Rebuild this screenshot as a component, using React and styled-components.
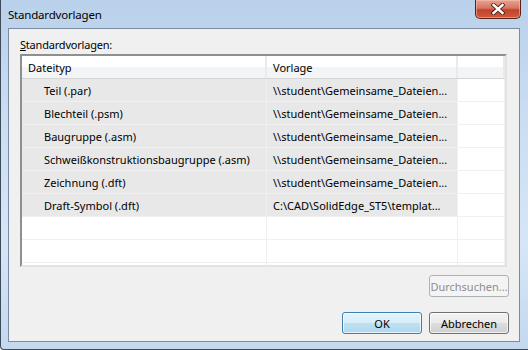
import React from "react"
import styled, { createGlobalStyle } from "styled-components"

const GlobalStyle = createGlobalStyle`
    body {
        margin: 0;
        font-family: "Noto Sans", "Open Sans", sans-serif;
        font-size: 11px;
        color: #000;
    }
`

const Window = styled.div`
    width: 528px;
    height: 350px;
    box-sizing: border-box;
    display: flex;
    flex-direction: column;
    padding: 0 8px 7px 7px;
    border-left: 1px solid #3d4a5a;
    border-bottom: 1px solid #3d4a5a;
    border-bottom-left-radius: 4px;
    background: linear-gradient(to bottom, #b9d1ea 0%, #c9dcf1 30%, #d6e6f7 70%, #c4d8ee 100%);
    overflow: hidden;
`
const TitleBar = styled.div`
    height: 28px;
    display: flex;
    align-items: flex-start;
`
const Title = styled.div`
    padding-top: 7px;
    font-size: 11.5px;
    letter-spacing: -0.2px;
`
const CloseButton = styled.div`
    margin-left: auto;
    margin-right: -1px;
    width: 46px;
    height: 19px;
    box-sizing: border-box;
    border: 1px solid #5a2119;
    border-top: none;
    border-radius: 0 0 5px 5px;
    background: linear-gradient(to bottom, #e6a393 0%, #d7765f 45%, #c2432c 55%, #cf5a3e 100%);
    box-shadow: inset 0 0 0 1px rgba(255, 200, 190, 0.5);
    display: flex;
    align-items: center;
    justify-content: center;
`
const Client = styled.div`
    flex: 1;
    display: flex;
    flex-direction: column;
    background: #f0f0f0;
    border: 1px solid #7d8da1;
    padding: 8px 10px 7px 11px;
`
const Label = styled.div`
    height: 17px;
    line-height: 15px;
    letter-spacing: -0.2px;
`
const ListBox = styled.div`
    height: 213px;
    margin-right: 2px;
    box-sizing: border-box;
    border-top: 2px solid #8e8f8f;
    border-left: 2px solid #8e8f8f;
    border-right: 2px solid #e3e3e3;
    border-bottom: 2px solid #e3e3e3;
    background: #fff;
    overflow: hidden;
`
const Row = styled.div`
    display: grid;
    grid-template-columns: 245px 191px 1fr;
    height: 22px;
    border-bottom: 1px solid ${props => props.header ? "#d5d5d5" : "#f0f0f0"};
    background: ${props => props.header ? "linear-gradient(to bottom, #fff 0%, #fff 50%, #f3f4f6 51%, #f3f4f6 100%)" : "#fff"};
`
const Cell = styled.div`
    display: flex;
    align-items: center;
    padding-left: ${props => props.indent ? 22 : 6}px;
    border-right: ${props => props.header ? "2px solid #e8eaec" : "1px solid #f0f0f0"};
    background: ${props => props.filled ? "#e8e8e8" : "transparent"};
    white-space: nowrap;
    overflow: hidden;
`
const ButtonRow = styled.div`
    display: flex;
    justify-content: flex-end;
    gap: 7px;
    margin-top: ${props => props.top}px;
`
const Button = styled.div`
    width: 80px;
    height: 22px;
    box-sizing: border-box;
    border-radius: 3px;
    display: flex;
    align-items: center;
    justify-content: center;
    border: 1px solid ${props => props.disabled ? "#adb2b5" : props.primary ? "#3c7fb1" : "#707070"};
    color: ${props => props.disabled ? "#8d8d8d" : "#000"};
    background: ${props => props.disabled
        ? "#f4f4f4"
        : props.primary
            ? "linear-gradient(to bottom, #e5f4fc 0%, #d6edf8 50%, #bfe1f3 51%, #aed7ee 100%)"
            : "linear-gradient(to bottom, #f2f2f2 0%, #ebebeb 50%, #dddddd 51%, #cfcfcf 100%)"};
    box-shadow: ${props => props.disabled ? "none" : "inset 0 0 0 1px rgba(255,255,255,0.7)"};
`

const rows = [
    ["Teil (.par)", "\\\\student\\Gemeinsame_Dateien..."],
    ["Blechteil (.psm)", "\\\\student\\Gemeinsame_Dateien..."],
    ["Baugruppe (.asm)", "\\\\student\\Gemeinsame_Dateien..."],
    ["Schweißkonstruktionsbaugruppe (.asm)", "\\\\student\\Gemeinsame_Dateien..."],
    ["Zeichnung (.dft)", "\\\\student\\Gemeinsame_Dateien..."],
    ["Draft-Symbol (.dft)", "C:\\CAD\\SolidEdge_ST5\\templat..."],
]

const CloseIcon = () => (
    <svg width="14" height="12" viewBox="0 0 14 12">
        <path d="M2.5 2 L11.5 10 M11.5 2 L2.5 10" stroke="#4a1a12" strokeWidth="4.2" strokeLinecap="square" />
        <path d="M2.5 2 L11.5 10 M11.5 2 L2.5 10" stroke="#fff" strokeWidth="2.4" strokeLinecap="square" />
    </svg>
)

const App = () => {
  return (
    <>
      <GlobalStyle />
      <Window>
        <TitleBar>
            <Title>Standardvorlagen</Title>
            <CloseButton><CloseIcon /></CloseButton>
        </TitleBar>
        <Client>
            <Label><u>S</u>tandardvorlagen:</Label>
            <ListBox>
                <Row header>
                    <Cell header>Dateityp</Cell>
                    <Cell header>Vorlage</Cell>
                    <Cell header />
                </Row>
                {rows.map(([type, path]) => (
                    <Row key={type}>
                        <Cell filled indent>{type}</Cell>
                        <Cell filled>{path}</Cell>
                        <Cell />
                    </Row>
                ))}
                <Row><Cell /><Cell /><Cell /></Row>
                <Row><Cell /><Cell /><Cell /></Row>
                <Row><Cell /><Cell /><Cell /></Row>
            </ListBox>
            <ButtonRow top={8}>
                <Button disabled>Durchsuchen...</Button>
            </ButtonRow>
            <ButtonRow top={15}>
                <Button primary>OK</Button>
                <Button>Abbrechen</Button>
            </ButtonRow>
        </Client>
      </Window>
    </>
  )
}

export default App
